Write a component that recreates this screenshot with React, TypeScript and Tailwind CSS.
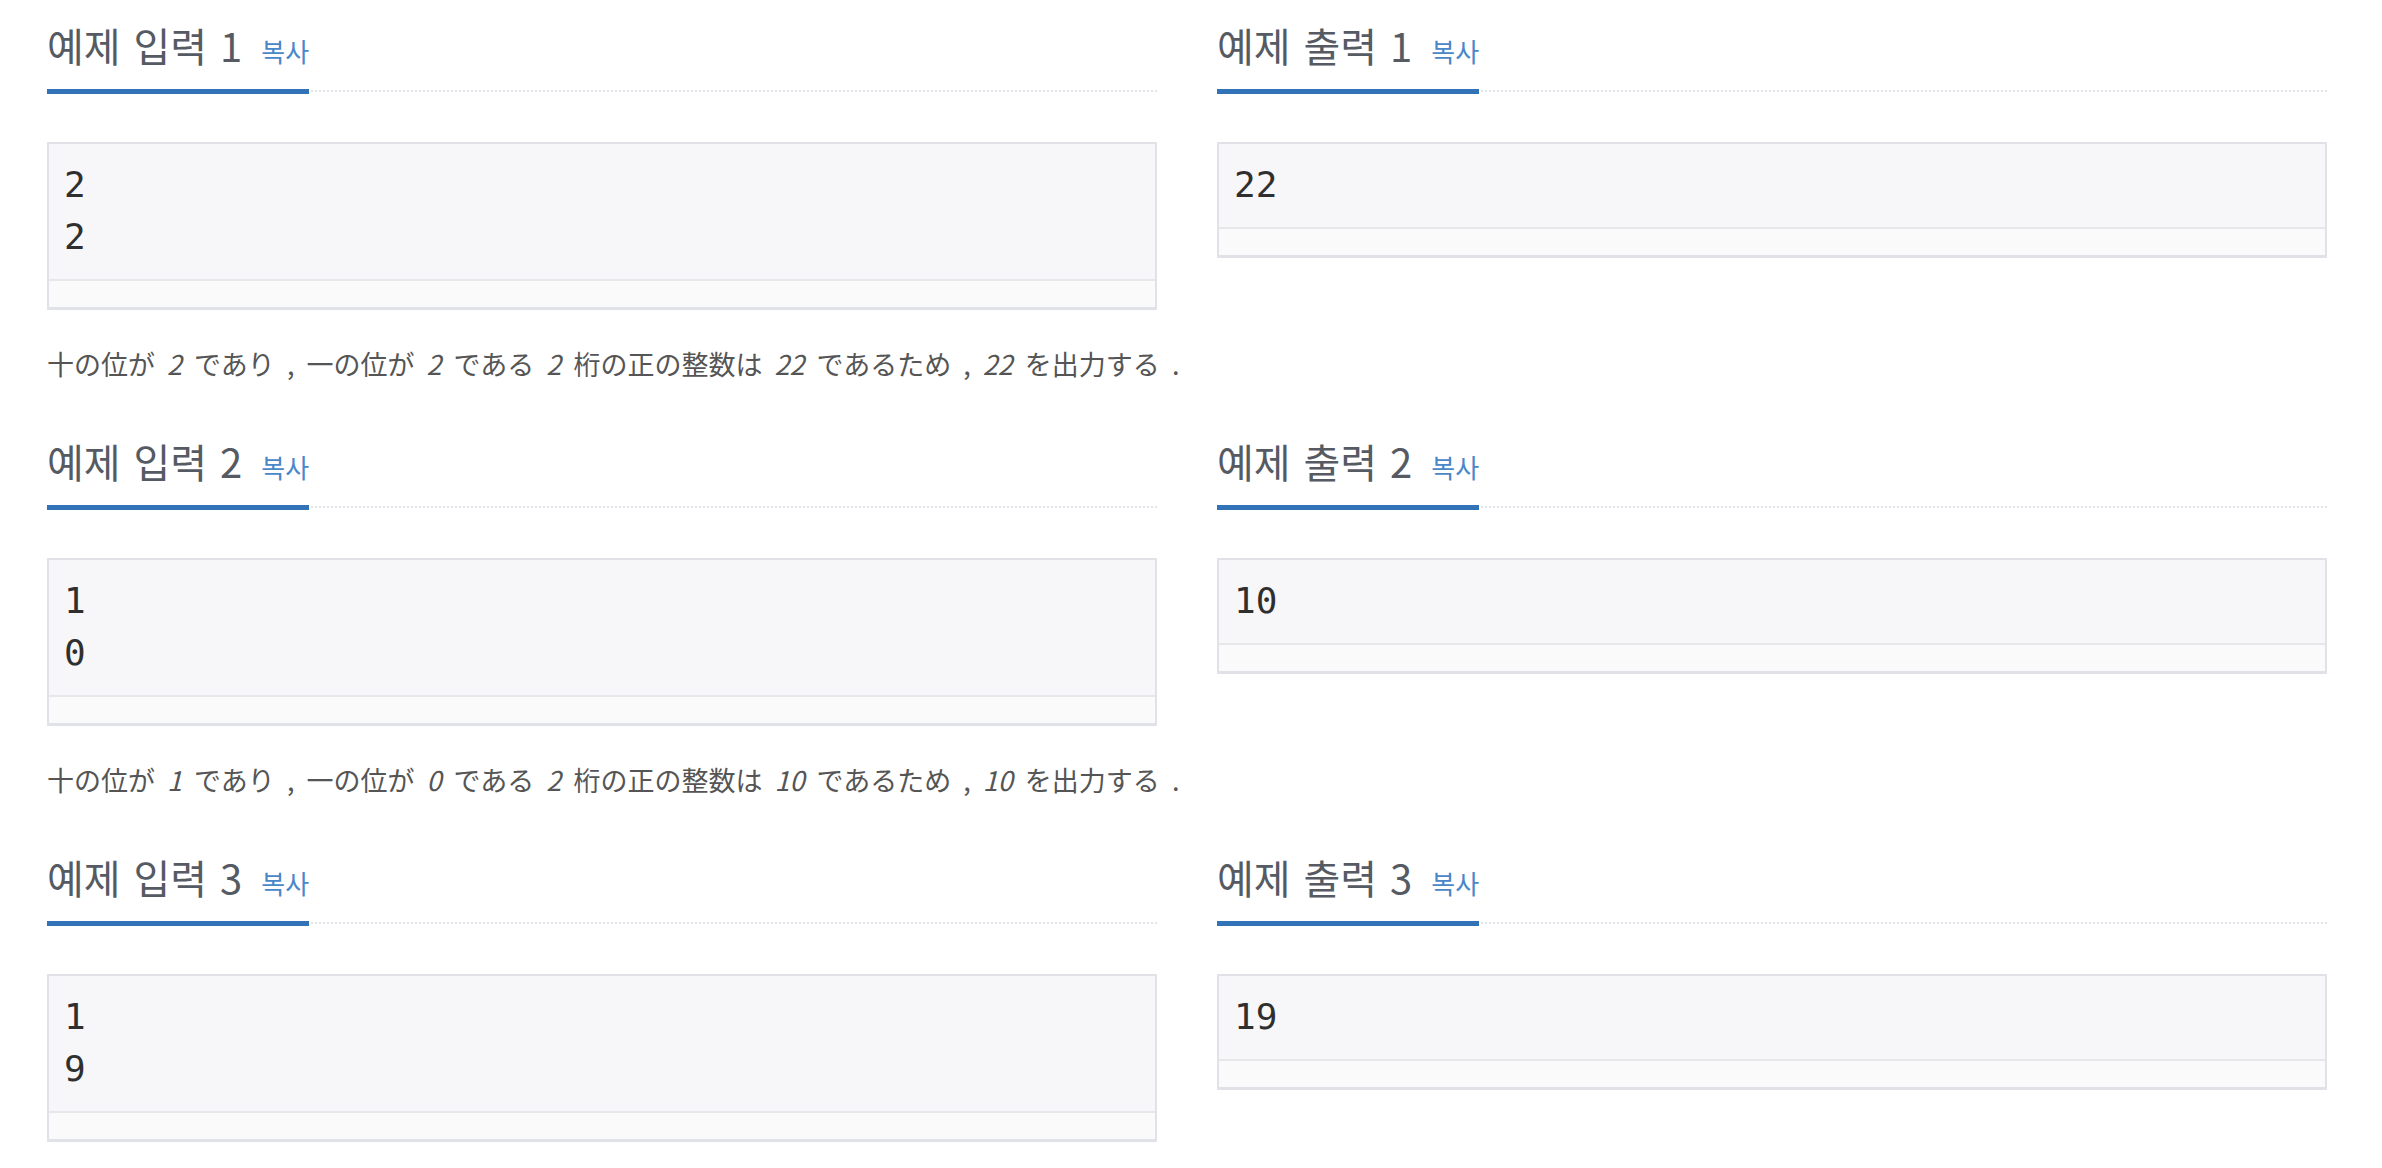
import React from "react";

type Part = string | { i: string };

type Sample = {
  no: number;
  input: string;
  output: string;
  desc?: Part[];
};

const samples: Sample[] = [
  {
    no: 1,
    input: "2\n2",
    output: "22",
    desc: ["十の位が ", { i: "2" }, " であり , 一の位が ", { i: "2" }, " である ", { i: "2" }, " 桁の正の整数は ", { i: "22" }, " であるため , ", { i: "22" }, " を出力する ."],
  },
  {
    no: 2,
    input: "1\n0",
    output: "10",
    desc: ["十の位が ", { i: "1" }, " であり , 一の位が ", { i: "0" }, " である ", { i: "2" }, " 桁の正の整数は ", { i: "10" }, " であるため , ", { i: "10" }, " を出力する ."],
  },
  {
    no: 3,
    input: "1\n9",
    output: "19",
  },
];

function Headline({ title }: { title: string }) {
  return (
    <div className="flex border-b-2 border-dotted border-[#e2e6ec]">
      <h2 className="-mb-[4px] inline-block border-b-[5px] border-[#3173b6] pb-[22px] font-['Noto_Sans_CJK_KR',sans-serif] text-[40px] leading-[44px] font-normal text-[#555a63] [word-spacing:4px]">
        {title}
        <button className="ml-[19px] cursor-pointer align-baseline text-[26px] leading-none text-[#4a87c8] [word-spacing:0]">복사</button>
      </h2>
    </div>
  );
}

function SampleBox({ text }: { text: string }) {
  return (
    <div className="border-2 border-b-[3px] border-[#e1e1e8] bg-[#fafafa]">
      <pre className="border-b-2 border-[#e6e6eb] bg-[#f7f7f9] px-[15px] pt-[15px] pb-[16px] font-['DejaVu_Sans_Mono',monospace] text-[36px] leading-[52px] text-[#2f2f2f]">
        {text}
      </pre>
      <div className="h-[26px]" />
    </div>
  );
}

export default function App() {
  return (
    <div className="min-h-screen bg-white pl-[47px] pr-[55px] pt-[23px]">
      {samples.map((s) => (
        <div key={s.no} className="mb-[56px]">
          <div className="grid grid-cols-2 gap-x-[60px]">
            <div>
              <Headline title={`예제 입력 ${s.no}`} />
              <div className="mt-[50px]">
                <SampleBox text={s.input} />
              </div>
            </div>
            <div>
              <Headline title={`예제 출력 ${s.no}`} />
              <div className="mt-[50px]">
                <SampleBox text={s.output} />
              </div>
            </div>
          </div>
          {s.desc && (
            <p className="mt-[35px] font-['Noto_Sans_CJK_JP',sans-serif] text-[27px] leading-[38px] text-[#555555] [word-spacing:6px]">
              {s.desc.map((p, idx) =>
                typeof p === "string" ? <span key={idx}>{p}</span> : <i key={idx}>{p.i}</i>
              )}
            </p>
          )}
        </div>
      ))}
    </div>
  );
}
